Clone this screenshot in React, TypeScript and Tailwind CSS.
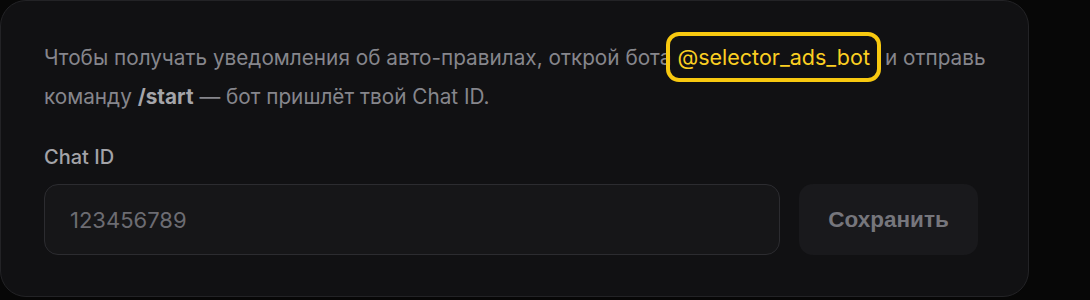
import React from 'react'

export default function App() {
  return (
    <div className="h-[300px] w-[1090px] overflow-hidden bg-[#070707]" style={{ fontFamily: 'Inter, "Noto Sans", sans-serif' }}>
      <div className="h-[297px] w-[1029px] rounded-[26px] border border-[#232326] bg-[#111113] pl-[43px] pr-[20px] pt-[31px]">
        <p className="w-[965px] text-[20.75px] leading-[29px] text-[#86868c]">
          Чтобы получать уведомления об авто-правилах, открой бота
          <span className="ml-[-5px] mr-[4px] inline-block rounded-[13px] border-[4px] border-[#f8c910] px-[7px] py-[6px] text-[21.5px] leading-[30px] text-[#fbcf22]">
            @selector_ads_bot
          </span>
          и отправь команду <b className="font-bold text-[#a5a5aa]">/start</b> — бот пришлёт твой Chat ID.
        </p>

        <label className="mt-[34px] block text-[20px] font-medium leading-[24px] text-[#a3a3a8]">Chat ID</label>

        <div className="mt-[15px] flex gap-[19px]">
          <input
            placeholder="123456789"
            className="h-[71px] w-[736px] rounded-[14px] border border-[#2c2c30] bg-[#161618] px-[25px] text-[22px] text-[#d0d0d4] outline-none placeholder:text-[#6c6c72]"
          />
          <button
            className="h-[71px] w-[179px] rounded-[14px] bg-[#19191c] text-[22.5px] font-bold text-[#76767c]"
            style={{ fontFamily: '"Liberation Sans", Arial, sans-serif' }}
          >
            Сохранить
          </button>
        </div>
      </div>
    </div>
  )
}
